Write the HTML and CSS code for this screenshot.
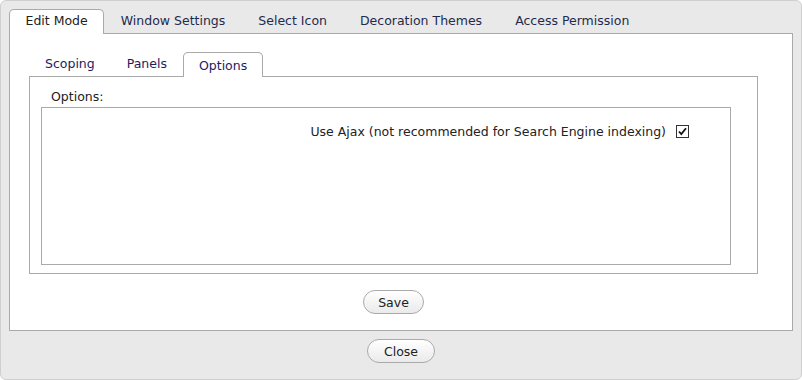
FILE: index.html
```html
<!DOCTYPE html>
<html lang="en">
<head>
    <meta charset="UTF-8">
    <meta name="viewport" content="width=device-width, initial-scale=1.0">
    <title>Portlet Settings</title>
    <link rel="stylesheet" href="styles.css">
</head>
<body>
    <div class="dialog">
        <ul class="tabs">
            <li class="tab tab-active">Edit Mode</li>
            <li class="tab">Window Settings</li>
            <li class="tab">Select Icon</li>
            <li class="tab">Decoration Themes</li>
            <li class="tab">Access Permission</li>
        </ul>

        <div class="panel">
            <ul class="tabs sub-tabs">
                <li class="tab">Scoping</li>
                <li class="tab">Panels</li>
                <li class="tab tab-active">Options</li>
            </ul>

            <div class="sub-panel">
                <div class="group-label">Options:</div>
                <div class="group">
                    <div class="option-row">
                        <label for="use_ajax" class="option-label">Use Ajax (not recommended for Search Engine indexing)</label>
                        <span class="check" id="use_ajax">
                            <svg width="13" height="13" viewBox="0 0 13 13">
                                <rect x="0.5" y="0.5" width="12" height="12" fill="#fff" stroke="#333"/>
                                <path d="M3 6.5 L5.3 9 L10 3.2" fill="none" stroke="#111" stroke-width="1.8"/>
                            </svg>
                        </span>
                    </div>
                </div>
            </div>

            <div class="actions">
                <button type="button" class="btn">Save</button>
            </div>
        </div>

        <div class="footer">
            <button type="button" class="btn btn-close">Close</button>
        </div>
    </div>
</body>
</html>
```

FILE: styles.css
```css
:root {
    --color-white: #FFFFFF;
    --color-bg: #E9E9E9;
    --color-border: #AAAAAA;
    --color-frame: #CFCFCF;
    --color-text: #222222;
    --color-tab: #1F2B4D;
    --color-subtab: #241B63;
}

body {
    font-family: "DejaVu Sans", Verdana, sans-serif;
    font-size: 12.5px;
    color: var(--color-text);
    margin: 0;
    padding: 0;
    background-color: var(--color-white);
}

.dialog {
    width: 802px;
    height: 380px;
    box-sizing: border-box;
    border: 1px solid var(--color-frame);
    border-radius: 6px;
    background-color: var(--color-bg);
    padding: 8px 8px 0 8px;
}

/* Onglets */
.tabs {
    list-style: none;
    margin: 0;
    padding: 0;
    display: flex;
    align-items: flex-end;
}

.tab {
    height: 23px;
    line-height: 22px;
    padding: 0 15.5px;
    border: 1px solid transparent;
    border-bottom: none;
    color: var(--color-tab);
    cursor: pointer;
}

.tab-active {
    position: relative;
    height: 24px;
    margin-bottom: -1px;
    background-color: var(--color-white);
    border-color: var(--color-border);
    border-radius: 5px 5px 0 0;
    color: var(--color-text);
}

.panel {
    background-color: var(--color-white);
    border: 1px solid var(--color-border);
    padding: 18px 34px 16px 19px;
}

.sub-tabs .tab {
    padding: 0 15px;
    color: var(--color-subtab);
}

.sub-tabs .tab-active {
    line-height: 25px;
}

.sub-panel {
    border: 1px solid var(--color-border);
    padding: 12px 26px 8px 11px;
}

.group-label {
    line-height: 16px;
    padding-left: 10px;
    margin-bottom: 2px;
}

.group {
    height: 156px;
    border: 1px solid var(--color-border);
}

.option-row {
    display: flex;
    justify-content: flex-end;
    align-items: center;
    gap: 10px;
    padding: 16px 41px 0 0;
}

.check {
    display: flex;
}

.actions {
    display: flex;
    justify-content: center;
    margin-top: 16px;
}

.footer {
    display: flex;
    justify-content: center;
    margin-top: 8px;
}

.btn {
    height: 24px;
    padding: 0 14px;
    font-family: inherit;
    font-size: 12.5px;
    color: var(--color-text);
    background: linear-gradient(#FFFFFF, #EAEAEA);
    border: 1px solid var(--color-border);
    border-radius: 12px;
    cursor: pointer;
}

.btn-close {
    padding: 0 16px;
}
```
